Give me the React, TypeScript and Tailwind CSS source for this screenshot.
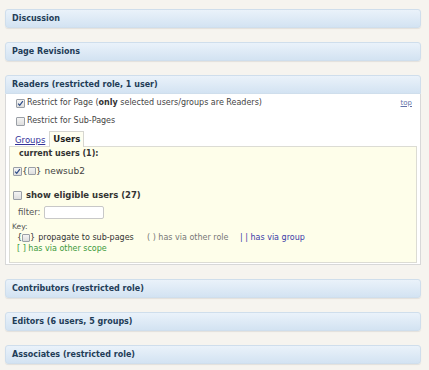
import React from 'react';

function Box({ checked = false, size = 9 }: { checked?: boolean; size?: number }) {
  return (
    <span
      className={`relative inline-flex shrink-0 items-center justify-center rounded-[1px] border border-[#9a9fa6] bg-linear-to-b from-[#f4f4f4] to-[#dedede] ${
        size === 9 ? 'h-[9px] w-[9px]' : 'h-[8px] w-[8px]'
      }`}
    >
      {checked && (
        <svg viewBox="0 0 8 8" className="h-[7px] w-[7px]">
          <path d="M1.3 4.2 L3.1 6.1 L6.7 1.4" fill="none" stroke="#2c4a86" strokeWidth="1.4" />
        </svg>
      )}
    </span>
  );
}

function Bar({ children, top = false }: { children: React.ReactNode; top?: boolean }) {
  return (
    <div
      className={`flex h-[19px] items-center border border-[#cfdeec] bg-linear-to-b from-[#eaf2fa] to-[#d3e3f2] px-[6px] text-[8px] font-bold text-[#1f3d58] ${
        top ? 'rounded-t-[3px]' : 'rounded-[3px] shadow-[0_1px_1px_rgba(0,0,0,0.08)]'
      }`}
    >
      {children}
    </div>
  );
}

function ReadersPanel() {
  return (
    <div className="flex flex-col">
      <Bar top>Readers (restricted role, 1 user)</Bar>
      <div className="flex h-[171px] flex-col border border-t-0 border-[#d8d8d8] bg-white px-[3px] pb-[1px] text-[8px] text-[#444]">
        <div className="mt-[4px] flex h-[10px] items-center pl-[7px] pr-[5px]">
          <Box checked />
          <span className="ml-[2px]">
            Restrict for Page (<b className="text-[#333]">only</b> selected users/groups are Readers)
          </span>
          <a className="ml-auto text-[7px] text-[#6272a8] underline">top</a>
        </div>
        <div className="mt-[8px] flex h-[10px] items-center pl-[7px]">
          <Box />
          <span className="ml-[2px]">Restrict for Sub-Pages</span>
        </div>
        <div className="relative z-10 mt-[5px] flex h-[15px] items-end pl-[6px] text-[8.5px]">
          <a className="mb-[2px] text-[#333399] underline">Groups</a>
          <div className="-mb-px ml-[4px] flex h-[16px] items-center border border-b-0 border-[#d6d6d0] bg-[#fefef0] px-[3px] font-bold text-[#222]">
            Users
          </div>
        </div>
        <div className="flex h-[117px] flex-col border border-[#dcdcd4] bg-[#fefeea]">
          <div className="mt-[2px] flex h-[10px] items-center pl-[9px] font-bold text-[#333]">
            current users (1):
          </div>
          <div className="mt-[7px] flex h-[10px] items-center pl-[3px] text-[#444]">
            <Box checked />
            <span className="text-[9px] leading-none">{'{'}</span>
            <Box size={8} />
            <span className="text-[9px] leading-none">{'}'}</span>
            <span className="ml-[3px] text-[9px]">newsub2</span>
          </div>
          <div className="mt-[14px] flex h-[10px] items-center pl-[3px]">
            <Box />
            <span className="ml-[4px] text-[8.5px] font-bold text-[#333]">show eligible users (27)</span>
          </div>
          <div className="mt-[6px] flex h-[13px] items-center pl-[8px]">
            <span className="w-[26px] text-[8.5px] text-[#555]">filter:</span>
            <span className="h-[13px] w-[60px] rounded-[2px] border border-[#c8c8c8] bg-white" />
          </div>
          <div className="mt-[3px] flex h-[9px] items-center pl-[2px] text-[7.5px] text-[#555]">Key:</div>
          <div className="mt-[2px] flex h-[10px] items-center pl-[7px] text-[8px]">
            <span className="flex w-[130px] items-center text-[#333]">
              <span>{'{'}</span>
              <Box size={8} />
              <span>{'}'}</span>
              <span className="ml-[3px]">propagate to sub-pages</span>
            </span>
            <span className="w-[93px] text-[#777]">( )&nbsp;has via other role</span>
            <span className="text-[#3a3aa8]">| |&nbsp;has via group</span>
          </div>
          <div className="mt-[1px] flex h-[10px] items-center pl-[7px] text-[8px] text-[#3c9a3c]">
            [ ]&nbsp;has via other scope
          </div>
        </div>
      </div>
    </div>
  );
}

export default function App() {
  return (
    <div className="min-h-screen bg-[#f6f4ef] px-[5px] pt-[9px] font-['DejaVu_Sans',sans-serif] leading-none">
      <div className="flex w-[416px] flex-col gap-[14px]">
        <Bar>Discussion</Bar>
        <Bar>Page Revisions</Bar>
        <ReadersPanel />
        <Bar>Contributors (restricted role)</Bar>
        <Bar>Editors (6 users, 5 groups)</Bar>
        <Bar>Associates (restricted role)</Bar>
      </div>
    </div>
  );
}
